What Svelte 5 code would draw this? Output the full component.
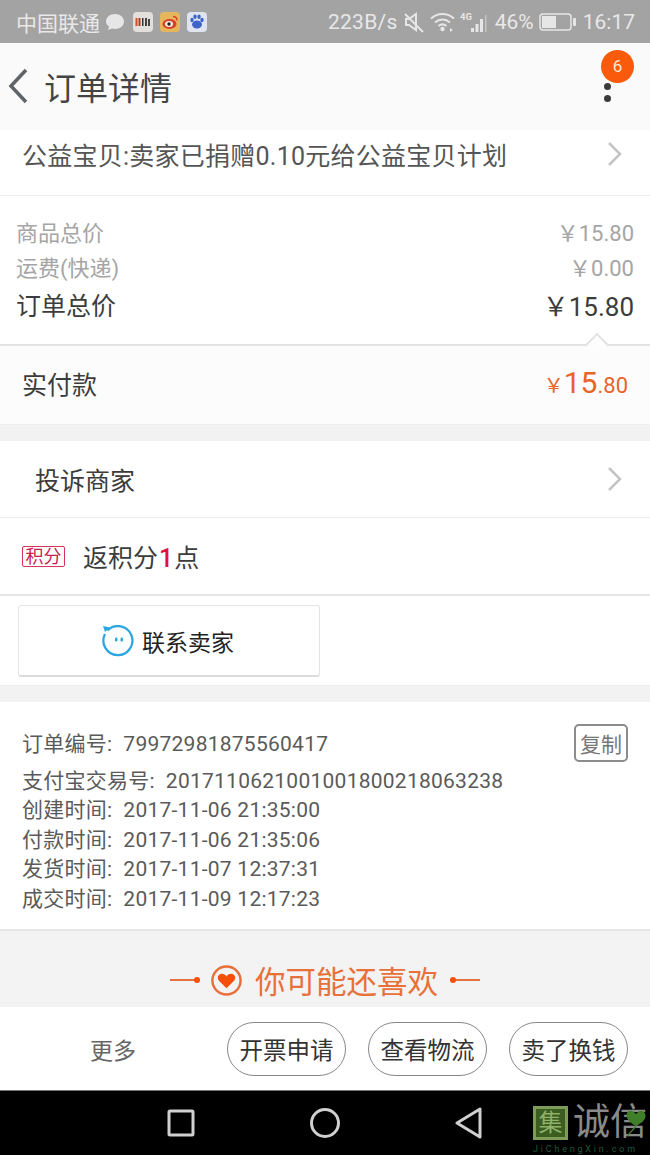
<script>
	const prices = [
		{ label: '商品总价', value: '15.80' },
		{ label: '运费(快递)', value: '0.00' }
	];
	const times = [
		{ label: '创建时间', value: '2017-11-06 21:35:00' },
		{ label: '付款时间', value: '2017-11-06 21:35:06' },
		{ label: '发货时间', value: '2017-11-07 12:37:31' },
		{ label: '成交时间', value: '2017-11-09 12:17:23' }
	];
	const actions = ['开票申请', '查看物流', '卖了换钱'];
</script>

<div class="page">
	<div class="status">
		<div class="status-left">
			<span>中国联通</span>
			<svg class="bubble" width="22" height="20" viewBox="0 0 22 20"><path d="M11 2c5 0 9 3 9 7.500s-4 7.500-9 7.500c-1 0-2-.1-3-.4L4 18l1-3.500C3 13 2 11.500 2 9.500 2 5 6 2 11 2z" fill="#e6e6e6" /></svg>
			<svg class="app" width="20" height="20" viewBox="0 0 20 20"><rect width="20" height="20" rx="4" fill="#e2dfdc" /><rect x="2.500" y="6" width="2" height="8" fill="#c8551f" /><rect x="5.500" y="6" width="2" height="8" fill="#b23b1c" /><rect x="9" y="6" width="1.500" height="8" fill="#333" /><rect x="12" y="6" width="2" height="8" fill="#444" /><rect x="15" y="7" width="2" height="7" fill="#444" /></svg>
			<svg class="app" width="20" height="20" viewBox="0 0 20 20"><rect width="20" height="20" rx="4" fill="#e6b65c" /><ellipse cx="9.500" cy="12" rx="7" ry="5" fill="#d8412a" /><ellipse cx="9" cy="12" rx="4" ry="3" fill="#f3ece0" /><circle cx="9" cy="12" r="1.700" fill="#222" /><path d="M13 4.500c2.500 0 4 1.500 4 4" stroke="#d8412a" stroke-width="1.500" fill="none" /></svg>
			<svg class="app" width="20" height="20" viewBox="0 0 20 20"><rect width="20" height="20" rx="4" fill="#dfe4f0" /><ellipse cx="5" cy="8" rx="1.700" ry="2.300" fill="#3f63c9" /><ellipse cx="8" cy="4.800" rx="1.700" ry="2.300" fill="#3f63c9" /><ellipse cx="12" cy="4.800" rx="1.700" ry="2.300" fill="#3f63c9" /><ellipse cx="15" cy="8" rx="1.700" ry="2.300" fill="#3f63c9" /><ellipse cx="10" cy="12.500" rx="5" ry="4" fill="#3f63c9" /></svg>
		</div>
		<div class="status-right">
			<span class="rate">223B/s</span>
			<svg width="22" height="22" viewBox="0 0 22 22" fill="none" stroke="#e6e6e6" stroke-width="2"><path d="M3 8v6h3l7 5V3L6 8z" /><path d="M2 3l18 18" /></svg>
			<svg width="25" height="22" viewBox="0 0 25 22" fill="none" stroke="#e6e6e6" stroke-width="2"><path d="M1 7.500c6.500-6 16.500-6 23 0" /><path d="M5 11.500c4.500-4 10.500-4 15 0" /><path d="M8.500 15c2.500-2 5.500-2 8 0" /><circle cx="12.500" cy="18" r="2.200" fill="#e6e6e6" stroke="none" /><path d="M20 17l3 2-3 2z" fill="#e6e6e6" stroke="none" /></svg>
			<svg class="signal" width="30" height="22" viewBox="0 0 30 22"><text x="0" y="9" font-size="9.500" font-weight="700" fill="#e6e6e6">4G</text><rect x="11" y="17" width="3" height="4" fill="#e6e6e6" /><rect x="15.500" y="13" width="3" height="8" fill="#e6e6e6" /><rect x="20" y="8" width="3" height="13" fill="#e6e6e6" /><rect x="25" y="4" width="1.500" height="17" fill="#c4c4c4" /></svg>
			<span>46%</span>
			<svg width="38" height="18" viewBox="0 0 38 18"><rect x="1" y="1" width="31" height="16" rx="3" fill="none" stroke="#e6e6e6" stroke-width="1.500" /><rect x="3" y="3" width="14" height="12" fill="#e6e6e6" /><rect x="34" y="5" width="3" height="8" rx="1" fill="#e6e6e6" /></svg>
			<span class="clock">16:17</span>
		</div>
	</div>

	<header class="topbar">
		<svg class="back" width="22" height="36" viewBox="0 0 22 36" fill="none" stroke="#5f6468" stroke-width="3.500"><path d="M19 2L4 18l15 16" /></svg>
		<h1>订单详情</h1>
		<div class="more">
			<span class="badge">6</span>
			<span class="dot"></span>
			<span class="dot"></span>
		</div>
	</header>

	<div class="charity">
		<span>公益宝贝:卖家已捐赠0.10元给公益宝贝计划</span>
		<svg class="chevron" width="16" height="26" viewBox="0 0 16 26" fill="none" stroke="#c4c4c4" stroke-width="2.500"><path d="M2 2l11 11L2 24" /></svg>
	</div>

	<section class="prices">
		{#each prices as p}
			<div class="price-row">
				<span>{p.label}</span>
				<span>￥{p.value}</span>
			</div>
		{/each}
		<div class="price-row total">
			<span>订单总价</span>
			<span class="total-value">￥15.80</span>
		</div>
		<span class="notch"></span>
	</section>

	<div class="paid">
		<span>实付款</span>
		<span class="paid-sum"><small class="yen">￥</small><b>15</b><small>.80</small></span>
	</div>

	<div class="gap small-gap"></div>

	<div class="complain">
		<span>投诉商家</span>
		<svg class="chevron" width="16" height="26" viewBox="0 0 16 26" fill="none" stroke="#c4c4c4" stroke-width="2.500"><path d="M2 2l11 11L2 24" /></svg>
	</div>

	<div class="points">
		<span class="tag">积分</span>
		<span class="points-text">返积分<em>1</em>点</span>
	</div>

	<div class="contact">
		<button class="contact-btn">
			<svg width="32" height="32" viewBox="0 0 32 32" fill="none"><path d="M5.500 5.500A14.500 14.500 0 1 1 3 9" stroke="#2ea7e0" stroke-width="2.300" /><path d="M1 1l7 1.500L3 7z" fill="#2ea7e0" /><rect x="13" y="12.500" width="2.500" height="4" rx="1.200" fill="#2ea7e0" /><rect x="18.500" y="12.500" width="2.500" height="4" rx="1.200" fill="#2ea7e0" /></svg>
			<span>联系卖家</span>
		</button>
	</div>

	<div class="gap"></div>

	<section class="order">
		<div class="order-no">
			<span><span class="key">订单编号:</span>79972981875560417</span>
			<button class="copy">复制</button>
		</div>
		<div class="alipay"><span class="key">支付宝交易号:</span>2017110621001001800218063238</div>
		{#each times as t}
			<div class="time"><span class="key">{t.label}:</span>{t.value}</div>
		{/each}
	</section>

	<div class="recommend">
		<span class="rule left"></span>
		<svg width="33" height="33" viewBox="0 0 34 34"><circle cx="17" cy="17" r="14.500" fill="none" stroke="#e8703a" stroke-width="2.500" /><path d="M17 25l-7.500-7.500c-2-2-2-5 0-6.500 2-1.500 5-1 7.500 1.500 2.500-2.500 5.500-3 7.500-1.500 2 1.500 2 4.500 0 6.500z" fill="#f4500a" /></svg>
		<span class="rec-title">你可能还喜欢</span>
		<span class="rule right"></span>
	</div>

	<div class="actions">
		<span class="more-link">更多</span>
		{#each actions as a}
			<button class="pill">{a}</button>
		{/each}
	</div>

	<nav class="navbar">
		<svg width="28" height="28" viewBox="0 0 28 28" fill="none" stroke="#d0d0d0" stroke-width="3"><rect x="2" y="2" width="24" height="24" rx="1" /></svg>
		<svg width="32" height="32" viewBox="0 0 32 32" fill="none" stroke="#d0d0d0" stroke-width="3"><circle cx="16" cy="16" r="13.500" /></svg>
		<svg width="28" height="32" viewBox="0 0 28 32" fill="none" stroke="#d0d0d0" stroke-width="3" stroke-linejoin="round"><path d="M25 2v28L2 16z" /></svg>
		<div class="mark">
			<div class="mark-top">
				<span class="mark-box">集</span>
				<span class="mark-name">诚信</span>
				<svg class="leaf" width="24" height="32" viewBox="0 0 28 34"><path d="M14 8C10 2 3 3 3 9c0 5 5 9 11 13 6-4 12-8 11-13-1-6-7-7-11-1z" fill="#3f7f2a" /><path d="M14 22L4 33" stroke="#3f7f2a" stroke-width="1.500" fill="none" /></svg>
			</div>
			<span class="mark-url">JiChengXin.com</span>
		</div>
	</nav>
</div>

<style>
	:global(body) {
		margin: 0;
	}
	.page {
		width: 650px;
		height: 1155px;
		overflow: hidden;
		display: flex;
		flex-direction: column;
		background: #fff;
		font-family: Roboto, "Noto Sans CJK SC", sans-serif;
		color: #3c3c3c;
	}
	.status {
		height: 43px;
		flex: none;
		display: flex;
		justify-content: space-between;
		align-items: center;
		padding: 0 15px 0 16px;
		background: #a3a3a3;
		color: #e8e8e8;
		font-size: 21px;
	}
	.status-left {
		display: flex;
		align-items: center;
		gap: 7px;
	}
	.status-left .bubble {
		margin-left: -3px;
	}
	.status-right {
		display: flex;
		align-items: center;
		gap: 5px;
	}
	.rate {
		letter-spacing: 0.3px;
	}
	.clock {
		margin-left: 1px;
	}
	.topbar {
		height: 87px;
		flex: none;
		display: flex;
		align-items: center;
		padding-left: 7px;
		padding-bottom: 2px;
		box-sizing: border-box;
		background: #fafafa;
		position: relative;
	}
	.back {
		margin-right: 15px;
	}
	h1 {
		margin: 0;
		font-size: 32px;
		font-weight: 400;
		color: #444;
	}
	.more {
		position: absolute;
		top: 7px;
		left: 601px;
		width: 33px;
		display: flex;
		flex-direction: column;
		gap: 5px;
	}
	.badge {
		width: 33px;
		height: 33px;
		margin-bottom: -5px;
		border-radius: 50%;
		background: #f95a0b;
		color: #fde8d8;
		font-size: 17px;
		line-height: 33px;
		text-align: center;
	}
	.dot {
		width: 7px;
		height: 7px;
		margin-left: 2.500px;
		border-radius: 50%;
		background: #3b3b3b;
	}
	.charity {
		height: 66px;
		flex: none;
		box-sizing: border-box;
		display: flex;
		justify-content: space-between;
		align-items: center;
		padding: 0 27px 18px 22px;
		font-size: 25px;
		letter-spacing: 0.25px;
		color: #555;
		border-bottom: 1px solid #eee;
	}
	.chevron {
		flex: none;
	}
	.prices {
		height: 150px;
		flex: none;
		box-sizing: border-box;
		padding: 17px 16px 0 16px;
		border-bottom: 2px solid #e2e2e2;
		position: relative;
	}
	.price-row {
		display: flex;
		justify-content: space-between;
		align-items: center;
		height: 35px;
		font-size: 22px;
		color: #a5a5a5;
	}
	.price-row.total {
		height: 42px;
		font-size: 25px;
		color: #3c3c3c;
	}
	.total-value {
		font-size: 26px;
	}
	.notch {
		position: absolute;
		right: 45px;
		bottom: -8px;
		width: 14px;
		height: 14px;
		background: #fdfdfd;
		border-top: 2px solid #e2e2e2;
		border-left: 2px solid #e2e2e2;
		transform: rotate(45deg);
	}
	.paid {
		height: 78px;
		flex: none;
		box-sizing: border-box;
		display: flex;
		justify-content: space-between;
		align-items: center;
		padding: 0 22px 5px;
		background: #fcfcfc;
		font-size: 25px;
	}
	.paid-sum {
		color: #e9642a;
		font-size: 22px;
	}
	.paid-sum b {
		font-size: 30px;
		font-weight: 400;
	}
	.paid-sum .yen {
		font-size: 20px;
	}
	.paid-sum small {
		font-size: 22px;
	}
	.gap {
		height: 17px;
		flex: none;
		background: #f2f2f2;
		border-top: 1px solid #eee;
		box-sizing: border-box;
	}
	.complain {
		height: 77px;
		flex: none;
		box-sizing: border-box;
		display: flex;
		justify-content: space-between;
		align-items: center;
		padding: 0 27px 1px 35px;
		font-size: 25px;
		border-bottom: 1px solid #eee;
	}
	.points {
		height: 78px;
		flex: none;
		box-sizing: border-box;
		display: flex;
		align-items: center;
		padding: 0 0 0 22px;
		border-bottom: 2px solid #e6e6e6;
	}
	.tag {
		width: 41px;
		height: 19px;
		border: 1px solid #d6345f;
		border-radius: 2px;
		color: #c9214f;
		font-size: 18px;
		line-height: 19px;
		text-align: center;
		margin-right: 18px;
	}
	.points-text {
		font-size: 25px;
	}
	.points-text em {
		font-style: normal;
		font-weight: 500;
		color: #e0103f;
		padding: 0 1px;
	}
	.contact {
		height: 89px;
		flex: none;
		box-sizing: border-box;
		padding: 9px 0 0 18px;
	}
	.contact-btn {
		width: 302px;
		height: 72px;
		display: flex;
		align-items: center;
		justify-content: center;
		gap: 8px;
		padding: 0 2px 0 0;
		background: #fff;
		border: 1px solid #e4e4e4;
		border-bottom: 2px solid #dcdcdc;
		border-radius: 3px;
		font: inherit;
		font-size: 23px;
		color: #222;
	}
	.order {
		height: 229px;
		flex: none;
		box-sizing: border-box;
		padding: 22px 22px 0;
		border-bottom: 2px solid #e6e6e6;
		font-size: 21px;
		letter-spacing: 0.25px;
		color: #5a5a5a;
	}
	.key {
		margin-right: 11px;
	}
	.order-no {
		display: flex;
		justify-content: space-between;
		align-items: flex-start;
		height: 38px;
	}
	.order-no > span {
		margin-top: 3px;
	}
	.copy {
		width: 54px;
		height: 38px;
		padding: 0;
		background: #fff;
		border: 2px solid #8c8c8c;
		border-radius: 5px;
		font: inherit;
		font-size: 21px;
		color: #777;
	}
	.alipay {
		margin-top: 4px;
		height: 30px;
		line-height: 30px;
	}
	.time {
		height: 29.500px;
		line-height: 29.500px;
	}
	.recommend {
		height: 76px;
		flex: none;
		display: flex;
		align-items: center;
		justify-content: center;
		gap: 10px;
		padding-top: 22px;
		box-sizing: border-box;
		background: #f3f3f3;
	}
	.rec-title {
		font-size: 30.500px;
		color: #e8703a;
		margin: 0 2px;
	}
	.rule {
		width: 30px;
		height: 1.500px;
		background: #e8703a;
		position: relative;
	}
	.rule::after {
		content: "";
		position: absolute;
		top: -2px;
		width: 6px;
		height: 6px;
		border-radius: 50%;
		background: #f4500a;
	}
	.rule.left::after {
		right: 0;
	}
	.rule.right::after {
		left: 0;
	}
	.actions {
		height: 83px;
		flex: none;
		box-sizing: border-box;
		display: flex;
		align-items: center;
		padding-right: 22px;
		gap: 22px;
		background: #fff;
	}
	.more-link {
		width: 205px;
		padding-left: 90px;
		box-sizing: border-box;
		font-size: 23px;
		color: #666;
	}
	.pill {
		width: 119px;
		height: 54px;
		padding: 0;
		background: #fff;
		border: 1px solid #888;
		border-radius: 27px;
		font: inherit;
		font-size: 23.500px;
		color: #333;
	}
	.navbar {
		height: 65px;
		flex: none;
		display: flex;
		align-items: center;
		background: #000;
		border-top: 1px solid #777;
		box-sizing: border-box;
		padding-left: 167px;
		gap: 114px;
		position: relative;
	}
	.mark {
		position: absolute;
		left: 533px;
		top: 15px;
		width: 117px;
	}
	.mark-top {
		display: flex;
		align-items: center;
		gap: 5px;
		height: 34px;
		position: relative;
	}
	.mark-box {
		width: 29px;
		height: 28px;
		flex: none;
		border: 3px solid #7f9b58;
		background: #3b5d20;
		color: #8fb068;
		font-size: 24px;
		line-height: 28px;
		text-align: center;
	}
	.mark-name {
		font-size: 37px;
		line-height: 34px;
		color: #8a8a8a;
		white-space: nowrap;
	}
	.leaf {
		position: absolute;
		left: 91px;
		top: 0;
	}
	.mark-url {
		display: block;
		margin-top: 4px;
		font-size: 9px;
		line-height: 11px;
		letter-spacing: 2.800px;
		color: #1f5a3a;
		white-space: nowrap;
	}
</style>
